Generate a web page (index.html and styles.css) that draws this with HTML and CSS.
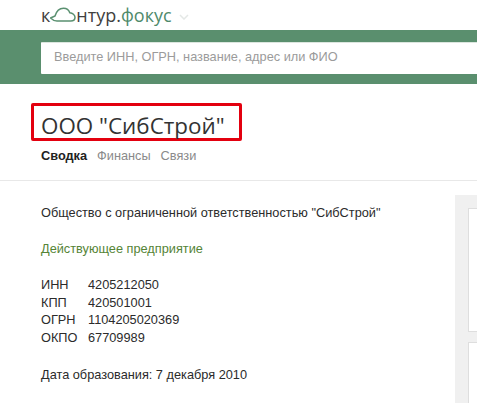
FILE: index.html
```html
<!DOCTYPE html>
<html lang="ru">
<head>
<meta charset="utf-8">
<title>Контур.Фокус</title>
<link rel="stylesheet" href="styles.css">
</head>
<body>
<header class="top">
  <div class="logo">
    <span class="logo-dark">к</span><svg class="cloud" width="26" height="15" viewBox="0 0 26 15"><path d="M0.5 11 L5 9 C6.5 4 9.5 1.2 13.5 1.2 C17 1.2 19 3.2 19.8 5.8 C22.6 6 25 8 25 10.2 C25 12.4 23.2 14 20.8 14 L7 14 C4.8 14 2.5 13 0.5 11 Z" fill="none" stroke="#5a9070" stroke-width="1.5" stroke-linejoin="round"/></svg><span class="logo-dark">нтур.</span><span class="logo-green">фокус</span>
    <svg class="chev" width="10" height="6" viewBox="0 0 10 6"><path d="M1 1 L5 5 L9 1" fill="none" stroke="#e4e8e6" stroke-width="1.5"/></svg>
  </div>
</header>
<div class="band">
  <div class="search">Введите ИНН, ОГРН, название, адрес или ФИО</div>
</div>
<section class="head">
  <div class="title-box"><h1>ООО "СибСтрой"</h1></div>
  <nav class="tabs"><b>Сводка</b><span>Финансы</span><span>Связи</span></nav>
</section>
<main class="content">
  <div class="info">
    <p class="name">Общество с ограниченной ответственностью "СибСтрой"</p>
    <p class="status">Действующее предприятие</p>
    <dl class="codes">
      <div><dt>ИНН</dt><dd>4205212050</dd></div>
      <div><dt>КПП</dt><dd>420501001</dd></div>
      <div><dt>ОГРН</dt><dd>1104205020369</dd></div>
      <div><dt>ОКПО</dt><dd>67709989</dd></div>
    </dl>
    <p class="date">Дата образования: 7 декабря 2010</p>
  </div>
  <aside class="side">
    <div class="card first"></div>
    <div class="card"></div>
  </aside>
</main>
</body>
</html>
```
FILE: styles.css
```css
html, body { margin: 0; padding: 0; background: #fff; }
body { width: 477px; height: 403px; overflow: hidden; font-family: "Liberation Sans", Arial, sans-serif; font-size: 12.75px; color: #2b2b2b; }
.top { height: 30px; box-sizing: border-box; padding-left: 41px; }
.logo { display: flex; align-items: center; height: 30px; font-family: "Open Sans", sans-serif; font-size: 18px; line-height: 30px; }
.logo-dark { color: #404040; }
.logo-green { color: #4f8a6b; }
.cloud { margin: 0 0 1px 0; }
.chev { margin: 3px 0 0 7px; }
.band { height: 54px; background: #5a8f6e; padding: 12px 0 10px 41px; box-sizing: border-box; }
.search { height: 32px; background: #fff; border-top: 1px solid #dce6df; box-sizing: border-box; border-radius: 1px 0 0 1px; padding-left: 13px; line-height: 28px; color: #9b9b9b; font-size: 12.75px; }
.head { height: 97px; box-sizing: border-box; border-bottom: 1px solid #e8e8e8; padding: 19px 0 0 31px; }
.title-box { width: 211px; height: 38px; box-sizing: border-box; border: 3px solid #e3000f; border-radius: 2px; padding: 7px 0 0 7px; }
h1 { margin: 0; font-family: "Open Sans", sans-serif; font-weight: 400; font-size: 22.4px; line-height: 25px; color: #333; white-space: nowrap; }
.tabs { display: flex; gap: 10px; margin: 7px 0 0 10px; font-size: 12.75px; line-height: 15px; color: #8a8a8a; }
.tabs b { color: #222; }
.content { display: flex; justify-content: space-between; height: 222px; overflow: hidden; }
.info { padding: 24px 0 0 41px; line-height: 16px; }
.info p { margin: 0; }
.name { color: #2b2b2b; }
.status { margin-top: 20px !important; color: #558436; }
.codes { margin: 20px 0 0; }
.codes div { display: flex; height: 17.6px; }
.codes dt { width: 47px; }
.codes dd { margin: 0; }
.date { margin-top: 20px !important; }
.side { width: 22px; margin-top: 14px; background: #f0f0f0; padding: 13px 0 0 13px; box-sizing: border-box; }
.card { background: #fff; border: 1px solid #dedede; border-right: 0; box-sizing: border-box; height: 124px; margin-bottom: 10px; }
.card.first { }
```
